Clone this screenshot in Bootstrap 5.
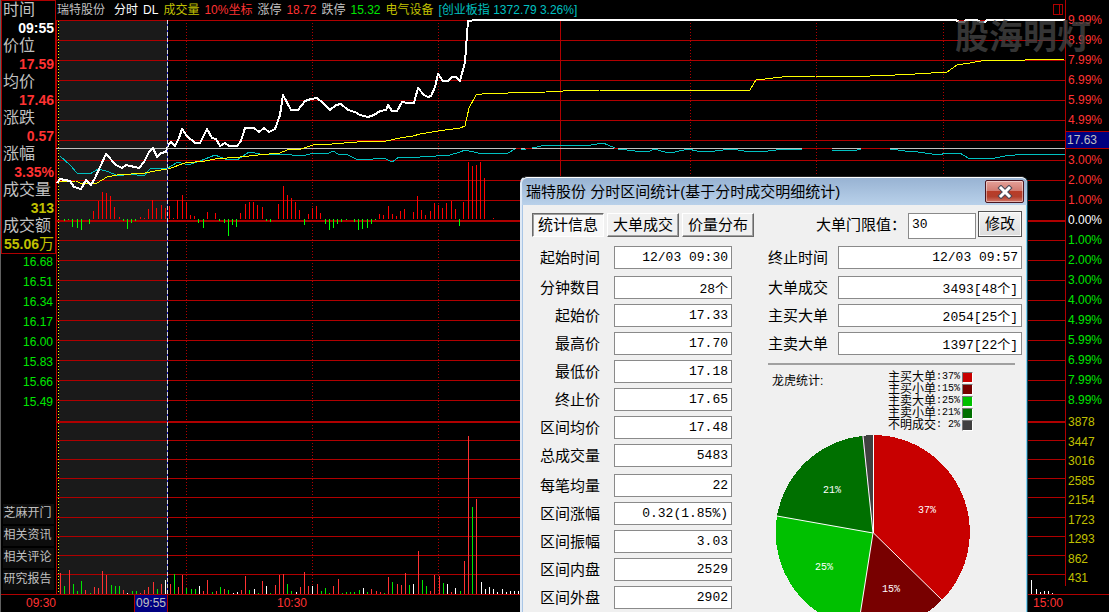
<!DOCTYPE html>
<html lang="zh-CN">
<head>
<meta charset="utf-8">
<meta name="viewport" content="width=device-width, initial-scale=1">
<title>瑞特股份 分时</title>
<link href="https://cdn.jsdelivr.net/npm/bootstrap@5.3.0/dist/css/bootstrap.min.css" rel="stylesheet">
<style>
  :root { --line:#b00000; --up:#ff3232; --down:#00e600; --gold:#c0c000; --teal:#00c0c0; --silver:#c0c0c0; }
  body { background:#000; color:var(--silver); font-family:"Liberation Sans","Noto Sans CJK SC",sans-serif; font-size:12px; line-height:16px; }
  .up { color:var(--up); } .down { color:var(--down); } .gold { color:var(--gold); } .teal { color:var(--teal); }
  .terminal { min-height:100vh; border-left:1px solid #606060; }
  .side { width:55px; flex:none; }
  .quote { border:1px solid var(--line); padding:0 1px; font-size:16px; line-height:18px; }
  .quote dt { font-weight:400; height:18px; white-space:nowrap; }
  .quote dd { margin:0; height:18px; text-align:right; font-weight:700; font-size:14px; white-space:nowrap; }
  .quote .unit { font-size:15px; font-weight:400; }
  .prices { gap:4px; padding-right:3px; }
  .links { gap:2px; padding:0 2px 4px; }
  .links button { height:20px; line-height:16px; border:0; padding:0 2px 2px 0; background:#0d0d0d; color:var(--silver); white-space:nowrap; }
  .ticker { height:20px; line-height:20px; white-space:nowrap; padding:0 1px; gap:5px; }
  .ticker b { font-weight:400; color:#fff; }
  .ticker .stock { margin-right:4px; }
  .plot { display:block; width:100%; height:574px; overflow:visible; }
  .scale { width:44px; flex:none; border-left:1px solid var(--line); padding-top:10px; height:586px; }
  .scale li { padding-left:2px; }
  .pct li { height:20px; line-height:20px; }
  .pct .cursor { background:#000080; height:18px; line-height:16px; padding-left:1px; margin:1px 0; border:solid var(--line); border-width:1px 0; }
  .times { display:grid; grid-template-columns:55px 78fr 34px 109fr 31px 725fr 31px 45px; border-top:1px solid var(--line); height:18px; }
  .times .now { background:#000080; color:var(--silver); border:solid var(--line); border-width:0 1px; padding-left:1px; }
  .watermark { position:absolute; right:18px; top:13px; font-size:34px; line-height:44px; font-weight:700; color:rgba(68,68,68,.78); font-family:"Noto Sans CJK SC",sans-serif; }

  .dlg { position:absolute; left:519px; top:176px; width:508px; background:#f0f0f0; color:#000; border:1px solid #222; border-left:2px solid #dfe9f5; border-right-color:#1f4a5a; border-radius:7px 7px 0 0; box-shadow:inset 1px 0 #a9c6e6, inset -1px 0 #7fd3f5; font-size:15px; line-height:22px; }
  .dlg-title { height:28px; background:linear-gradient(#98b3d3,#b9d1ea); border-top:1px solid #fff; border-radius:6px 6px 0 0; padding:2px 3px 0 4px; }
  .dlg-title h1 { font-size:15px; line-height:24px; margin:0; font-weight:400; }
  .btn-x { width:39px; height:23px; padding:0; border:1px solid #4b1620; border-radius:2px; background:linear-gradient(#e4a199 0,#d07a70 48%,#b83c28 50%,#b23f2c 75%,#d5786a 100%); box-shadow:inset 0 0 0 1px rgba(255,255,255,.45); line-height:0; }
  .dlg-body { padding:6px 5px 12px 10px; }
  .tools { height:28px; margin-bottom:7px; gap:2px; }
  .tabs { gap:3px; }
  .tab { width:72px; height:24px; padding:0; font-size:15px; line-height:20px; color:#000; background:#f0f0f0; border:1px solid; border-color:#fff #696969 #696969 #fff; box-shadow:inset -1px -1px #a0a0a0; }
  .tab.pressed { background:#f8f8f8; border-color:#696969 #fff #fff #696969; box-shadow:inset 1px 1px #a0a0a0; }
  .box { border:1px solid #8a8a8a; background:#fff; color:#000; font-family:"Liberation Mono","Noto Sans CJK SC",monospace; font-size:13px; height:23px; line-height:21px; padding:0 3px; border-radius:0; min-width:0; text-align:right; }
  .limit { width:68px; height:26px; text-align:left; padding-bottom:4px; }
  .btn-edit { width:44px; height:26px; font-size:15px; line-height:22px; padding:0; color:#000; border:1px solid #555; background:linear-gradient(#f4f4f4,#dcdcdc); box-shadow:inset 0 0 0 1px #fcfcfc; }
  .stats { width:200px; flex:none; }
  .stats, .big { display:flex; flex-direction:column; gap:5px; }
  .right-pane { margin-left:36px; }
  .rowline { display:flex; align-items:center; height:23px; white-space:nowrap; }
  .gapped { margin-bottom:2px; }
  .stats label { width:68px; text-align:right; margin-right:14px; }
  .stats .box { width:118px; }
  .big label { width:60px; margin-right:10px; }
  .big .box { flex:1; }
  .rule { margin:8px 7px 6px 0; border:0; border-top:2px solid #a0a0a0; opacity:1; }
  .keys { font-size:12px; line-height:12px; margin-right:49px; white-space:nowrap; }
  .keys li { display:flex; height:12px; align-items:center; }
  .keys span { font-family:"Liberation Mono",monospace; font-size:10px; white-space:pre; }
  .keys i { width:11px; height:11px; margin-left:2px; border:1px solid; border-color:#777 #fff #fff #777; }
  .k1 { background:#c80000; } .k2 { background:#780000; } .k3 { background:#00c000; } .k4 { background:#007000; } .k5 { background:#404040; }
  .pie { display:block; width:196px; height:196px; margin:3px 0 0 7px; }
</style>
</head>
<body>
<div class="terminal position-relative overflow-hidden">
  <div class="d-flex">
    <aside class="side d-flex flex-column">
      <dl class="quote mb-0">
        <dt>时间</dt><dd class="text-white">09:55</dd>
        <dt>价位</dt><dd class="up">17.59</dd>
        <dt>均价</dt><dd class="up">17.46</dd>
        <dt>涨跌</dt><dd class="up">0.57</dd>
        <dt>涨幅</dt><dd class="up">3.35%</dd>
        <dt>成交量</dt><dd class="gold">313</dd>
        <dt>成交额</dt><dd class="gold">55.06<span class="unit">万</span></dd>
      </dl>
      <div class="prices down d-flex flex-column text-end">
        <span>16.68</span><span>16.51</span><span>16.34</span><span>16.17</span><span>16.00</span><span>15.83</span><span>15.66</span><span>15.49</span>
      </div>
      <div class="links d-flex flex-column mt-auto">
        <button type="button">芝麻开门</button><button type="button">相关资讯</button><button type="button">相关评论</button><button type="button">研究报告</button>
      </div>
    </aside>

    <main class="flex-grow-1">
      <div class="ticker d-flex">
        <span class="stock">瑞特股份</span><b>分时</b><b>DL</b><span class="gold">成交量</span><span class="up">10%坐标</span><span>涨停</span><span class="up">18.72</span><span>跌停</span><span class="down">15.32</span><span class="gold">电气设备</span><span class="teal">[创业板指 1372.79 3.26%]</span>
        <svg class="ms-auto mt-1" width="11" height="12" fill="none" stroke="#b00000" shape-rendering="crispEdges"><path d="M.5.5h9v10h-9zM6.500.5v10"/></svg>
      </div>
      <svg class="plot" viewBox="56 20 1009 574" preserveAspectRatio="none" fill="none" shape-rendering="crispEdges">
        <rect x="59" y="21" width="108" height="573" fill="#1a1a1a"/>
        <g stroke="#b00000">
          <path id="grid"/>
          <path stroke-width="2" d="M56 221h1009M56 422h1009"/>
          <path d="M56.500 20v574M560.500 20v400"/>
          <path stroke-dasharray="1 2" d="M186.500 23v571M312.500 23v571M438.500 23v571M690.500 23v571M816.500 23v571M943.500 23v571"/>
        </g>
        <path stroke="#ffff00" stroke-dasharray="1 2" d="M58.500 21v573"/>
        <path id="momUp" stroke="#ff0000"/>
        <path id="momDown" stroke="#00ff00"/>
        <path id="volR" stroke="#ff3232"/>
        <path id="volG" stroke="#00e600"/>
        <path id="volW" stroke="#fff"/>
        <path stroke="#c0c0c0" d="M56 148.500H516M521 148.500h4M532 148.500h82M618 148.500h184M832 148.500h29M890 148.500h175"/>
        <path stroke="#b00000" d="M516 148.500h5M525 148.500h7M614 148.500h4M802 148.500h30M861 148.500h29"/>
        <path stroke="#00c0c0" d="M60 156L70 165 77 173 90 174 98 169 106 171 119 176 130 174 144 176 150 169 158 168 168 168 178 162 188 165 200 161 215 155 225 159 237 160 249 152 260 154 280 154 303 156 313 153 329 153 333 151 338 154 348 155 358 160 373 159 384 158 392 162 399 157 420 157 436 156 450 155 460 152 465 150 478 153 508 153 515 149M521 149h5M532 148L546 145 575 145 585 146 603 143 615 148M618 149L635 151 650 151 654 149 665 152 675 152 688 149 697 151 715 151 732 149 750 152 768 151 784 149 802 149M832 150h25l4-1M890 149L905 151 918 152 925 153 939 155 946 153 960 153 968 158 990 159 1005 156 1025 154 1065 154"/>
        <path stroke="#ffff00" d="M58 181.500L76 181 82 184 97 183 107 177 117 175 145 173 155 171 168 169 185 163 205 161 215 159 240 157 258 155 280 153 287 150 301 149 313 145 332 144 357 142 386 141 400 138 413 136 420 134 438 131 460 128 465 126 469 108 476 95 482 94 508 93 546 92 563 91 600 90 750 90 756 80 765 79 782 77 816 76 870 76 895 75 915 74 947 72 957 65 970 63 981 61 1000 60 1025 60 1065 59"/>
        <path stroke="#fff" stroke-width="2" stroke-linejoin="round" d="M57 183L60 179 70 181 74 187 81 189 86 180 91 185 95 178 106 154 116 165 122 168 126 165 139 168 144 162 149 152 153 148 157 157 161 153 166 152 168 145 171 142 175 146 179 138 182 129 187 136 195 143 200 143 207 129 212 138 216 139 220 146 225 143 229 146 237 146 241 141 245 128 254 128 259 132 264 128 269 132 275 129 280 115 283 95 291 110 298 110 305 101 311 99 317 98 323 103 330 110 336 105 341 104 348 110 355 112 360 115 368 117 374 115 380 111 386 110 388 105 392 111 397 111 402 102 408 103 414 103 418 88 424 95 428 97 431 96 435 87 438 74 443 81 448 81 452 77 456 77 460 81 465 62 468 21 476 20H956l3 2h5l2-2h11l3 2h5l2-2H1065"/>
        <path stroke="#2020c0" d="M167.500 20v574"/>
        <path stroke="#d8d8e0" stroke-dasharray="4 2" d="M167.500 20v574"/>
      </svg>
    </main>

    <div class="scale d-flex flex-column">
      <ul class="pct list-unstyled mb-0">
        <li class="up">9.99%</li><li class="up">8.99%</li><li class="up">7.99%</li><li class="up">6.99%</li><li class="up">5.99%</li><li class="up">4.99%</li>
        <li class="cursor">17.63</li>
        <li class="up">3.00%</li><li class="up">2.00%</li><li class="up">1.00%</li><li class="text-white">0.00%</li>
        <li class="down">1.00%</li><li class="down">2.00%</li><li class="down">3.00%</li><li class="down">4.00%</li><li class="down">4.99%</li><li class="down">5.99%</li><li class="down">6.99%</li><li class="down">7.99%</li><li class="down">8.99%</li>
      </ul>
      <ul class="gold list-unstyled mb-0 pt-1 flex-fill d-flex flex-column justify-content-between">
        <li>3878</li><li>3447</li><li>3016</li><li>2585</li><li>2154</li><li>1723</li><li>1293</li><li>862</li><li>431</li>
      </ul>
    </div>
  </div>

  <footer class="times up">
    <span class="text-end">09:30</span><i></i><span class="now">09:55</span><i></i><span>10:30</span><i></i><span>15:00</span>
  </footer>

  <div class="watermark">股海明灯</div>

  <section class="dlg" role="dialog" aria-labelledby="dlgTitle">
    <header class="dlg-title d-flex justify-content-between">
      <h1 id="dlgTitle">瑞特股份 分时区间统计(基于分时成交明细统计)</h1>
      <button class="btn-x" type="button" aria-label="关闭">
        <svg width="16" height="14" viewBox="0 0 16 14"><path d="M4 3l8 8M12 3l-8 8" stroke="#4a4a58" stroke-width="5" stroke-linecap="square"/><path d="M4 3l8 8M12 3l-8 8" stroke="#fff" stroke-width="3" stroke-linecap="square"/></svg>
      </button>
    </header>
    <div class="dlg-body">
      <div class="tools d-flex">
        <div class="tabs d-flex align-items-center">
          <button class="tab pressed" type="button">统计信息</button><button class="tab" type="button">大单成交</button><button class="tab" type="button">价量分布</button>
        </div>
        <label class="ms-auto align-self-center" for="limit">大单门限值：</label>
        <input class="box limit align-self-end" id="limit" value="30">
        <button class="btn-edit" type="button">修改</button>
      </div>
      <div class="d-flex">
        <div class="stats">
          <div class="rowline gapped"><label for="s1">起始时间</label><input class="box" id="s1" readonly value="12/03 09:30"></div>
          <div class="rowline"><label for="s2">分钟数目</label><input class="box" id="s2" readonly value="28个"></div>
          <div class="rowline"><label for="s3">起始价</label><input class="box" id="s3" readonly value="17.33"></div>
          <div class="rowline"><label for="s4">最高价</label><input class="box" id="s4" readonly value="17.70"></div>
          <div class="rowline"><label for="s5">最低价</label><input class="box" id="s5" readonly value="17.18"></div>
          <div class="rowline"><label for="s6">终止价</label><input class="box" id="s6" readonly value="17.65"></div>
          <div class="rowline"><label for="s7">区间均价</label><input class="box" id="s7" readonly value="17.48"></div>
          <div class="rowline gapped"><label for="s8">总成交量</label><input class="box" id="s8" readonly value="5483"></div>
          <div class="rowline"><label for="s9">每笔均量</label><input class="box" id="s9" readonly value="22"></div>
          <div class="rowline"><label for="s10">区间涨幅</label><input class="box" id="s10" readonly value="0.32(1.85%)"></div>
          <div class="rowline"><label for="s11">区间振幅</label><input class="box" id="s11" readonly value="3.03"></div>
          <div class="rowline"><label for="s12">区间内盘</label><input class="box" id="s12" readonly value="2529"></div>
          <div class="rowline"><label for="s13">区间外盘</label><input class="box" id="s13" readonly value="2902"></div>
        </div>
        <div class="right-pane flex-grow-1">
          <div class="big">
            <div class="rowline gapped"><label for="b1">终止时间</label><input class="box" id="b1" readonly value="12/03 09:57"></div>
            <div class="rowline"><label for="b2">大单成交</label><input class="box" id="b2" readonly value="3493[48个]"></div>
            <div class="rowline"><label for="b3">主买大单</label><input class="box" id="b3" readonly value="2054[25个]"></div>
            <div class="rowline"><label for="b4">主卖大单</label><input class="box" id="b4" readonly value="1397[22个]"></div>
          </div>
          <hr class="rule">
          <div class="keys d-flex justify-content-between">
            <div class="ps-1 pt-1">龙虎统计:</div>
            <ul class="list-unstyled mb-0">
              <li>主买大单<span>:37%</span><i class="k1"></i></li>
              <li>主买小单<span>:15%</span><i class="k2"></i></li>
              <li>主卖大单<span>:25%</span><i class="k3"></i></li>
              <li>主卖小单<span>:21%</span><i class="k4"></i></li>
              <li>不明成交<span>: 2%</span><i class="k5"></i></li>
            </ul>
          </div>
          <svg class="pie" viewBox="775 435 196 196">
            <g shape-rendering="crispEdges">
              <path fill="#c80000" d="M873 534V436A97 97 0 0 1 942 601z"/>
              <path fill="#780000" d="M873 534L942 601A97 97 0 0 1 858 629z"/>
              <path fill="#00c000" d="M873 534L858 629A97 97 0 0 1 777 517z"/>
              <path fill="#007000" d="M873 534L777 517A97 97 0 0 1 862 437z"/>
              <path fill="#404040" d="M873 534L862 437A97 97 0 0 1 873 436z"/>
            </g>
            <path fill="none" stroke="#fff" d="M873.500 436V534L942 601M873 534L858 629M873 534L777 517M873 534L863 437"/>
            <g fill="#fff" font-family="Liberation Mono, monospace" font-size="10" text-anchor="middle">
              <text x="927" y="514">37%</text><text x="891" y="593">15%</text><text x="824" y="571">25%</text><text x="832" y="494">21%</text>
            </g>
          </svg>
        </div>
      </div>
    </div>
  </section>
</div>
<script src="https://cdn.jsdelivr.net/npm/bootstrap@5.3.0/dist/js/bootstrap.bundle.min.js"></script>
<script>
  const put = (id, d) => document.getElementById(id).setAttribute('d', d);
  const rows = [20,40,60,80,100,120,140,160,180,200,240,260,280,300,320,340,360,380,400,440,459,478,497,517,536,555,574];
  put('grid', rows.map(y => `M56 ${y + .5}h1009`).join(''));

  // momentum bars: x, y of the far end
  const up = '93,211 98,201 102,192 106,193 110,196 114,207 119,217 140,217 144,218 148,209 152,200 156,208 161,205 165,208 169,206 173,218 177,200 182,195 186,202 190,215 194,216 207,212 215,213 240,213 245,204 249,202 253,202 257,205 262,207 278,204 283,186 287,195 291,198 295,202 299,210 308,214 312,208 316,206 320,213 379,214 383,215 388,206 392,214 396,216 400,211 404,209 413,212 417,196 421,210 425,215 430,211 434,203 438,205 442,208 446,203 451,201 455,209 463,202 468,162 472,166 476,165 480,162 484,178 493,218';
  const down = '64,221 68,220 72,227 77,228 81,230 89,224 123,221 127,229 131,223 135,221 198,223 203,228 219,221 224,223 228,236 232,225 236,227 266,221 270,222 304,225 325,224 329,230 333,228 337,224 341,222 346,220 354,222 358,230 362,229 367,228 371,224 375,220 459,226';
  const pairs = s => s.split(' ').map(p => p.split(',').map(Number));
  put('momUp', pairs(up).map(([x, y]) => `M${x + .5} 219V${y}`).join(''));
  put('momDown', pairs(down).map(([x, y]) => `M${x + .5} 219V${y}`).join(''));

  // volume bars: x, colour, height
  const vol = '60r21 64g8 69r24 73g10 77g3 81g13 85r4 90g1 94r7 98r6 102r23 106r19 111g9 115g8 119g8 123r4 127w1 132g3 136g3 140r1 144r4 148r7 153r12 157g5 161r10 165w14 170r10 174g20 178r7 182r19 186g6 191g5 195g5 199w8 203r3 207r14 212g2 216r3 220g7 224r5 228g4 233w1 237w2 241r4 245r18 249g4 254w5 258g1 262r13 266w8 270g1 275r9 279r19 283r20 287g10 291g3 296w2 300r7 304r22 308r8 312w8 317r10 321g3 325g6 329g1 333r8 338r15 342g1 346g2 350g2 354g2 359g4 363w6 367g2 371r5 376r3 380r2 384g1 388r17 392g12 397r10 401r9 405r21 409g9 413w10 418r43 422g14 426g8 430r3 434r19 439r18 443g11 447w10 451r2 455w6 460g3 464r33 468r158 472g87 476r95 481w12 485w5 489w7 493w5 497w2 502w5 506w2 510w3 514w3 518w3 1031w14 1036w5 1040w2 1044w3 1048w3 1052w1';
  const d = { r: '', g: '', w: '' };
  for (const [, x, c, h] of vol.matchAll(/(\d+)([rgw])(\d+)/g)) d[c] += `M${+x + .5} 594v-${h}`;
  put('volR', d.r); put('volG', d.g); put('volW', d.w);
</script>
</body>
</html>
